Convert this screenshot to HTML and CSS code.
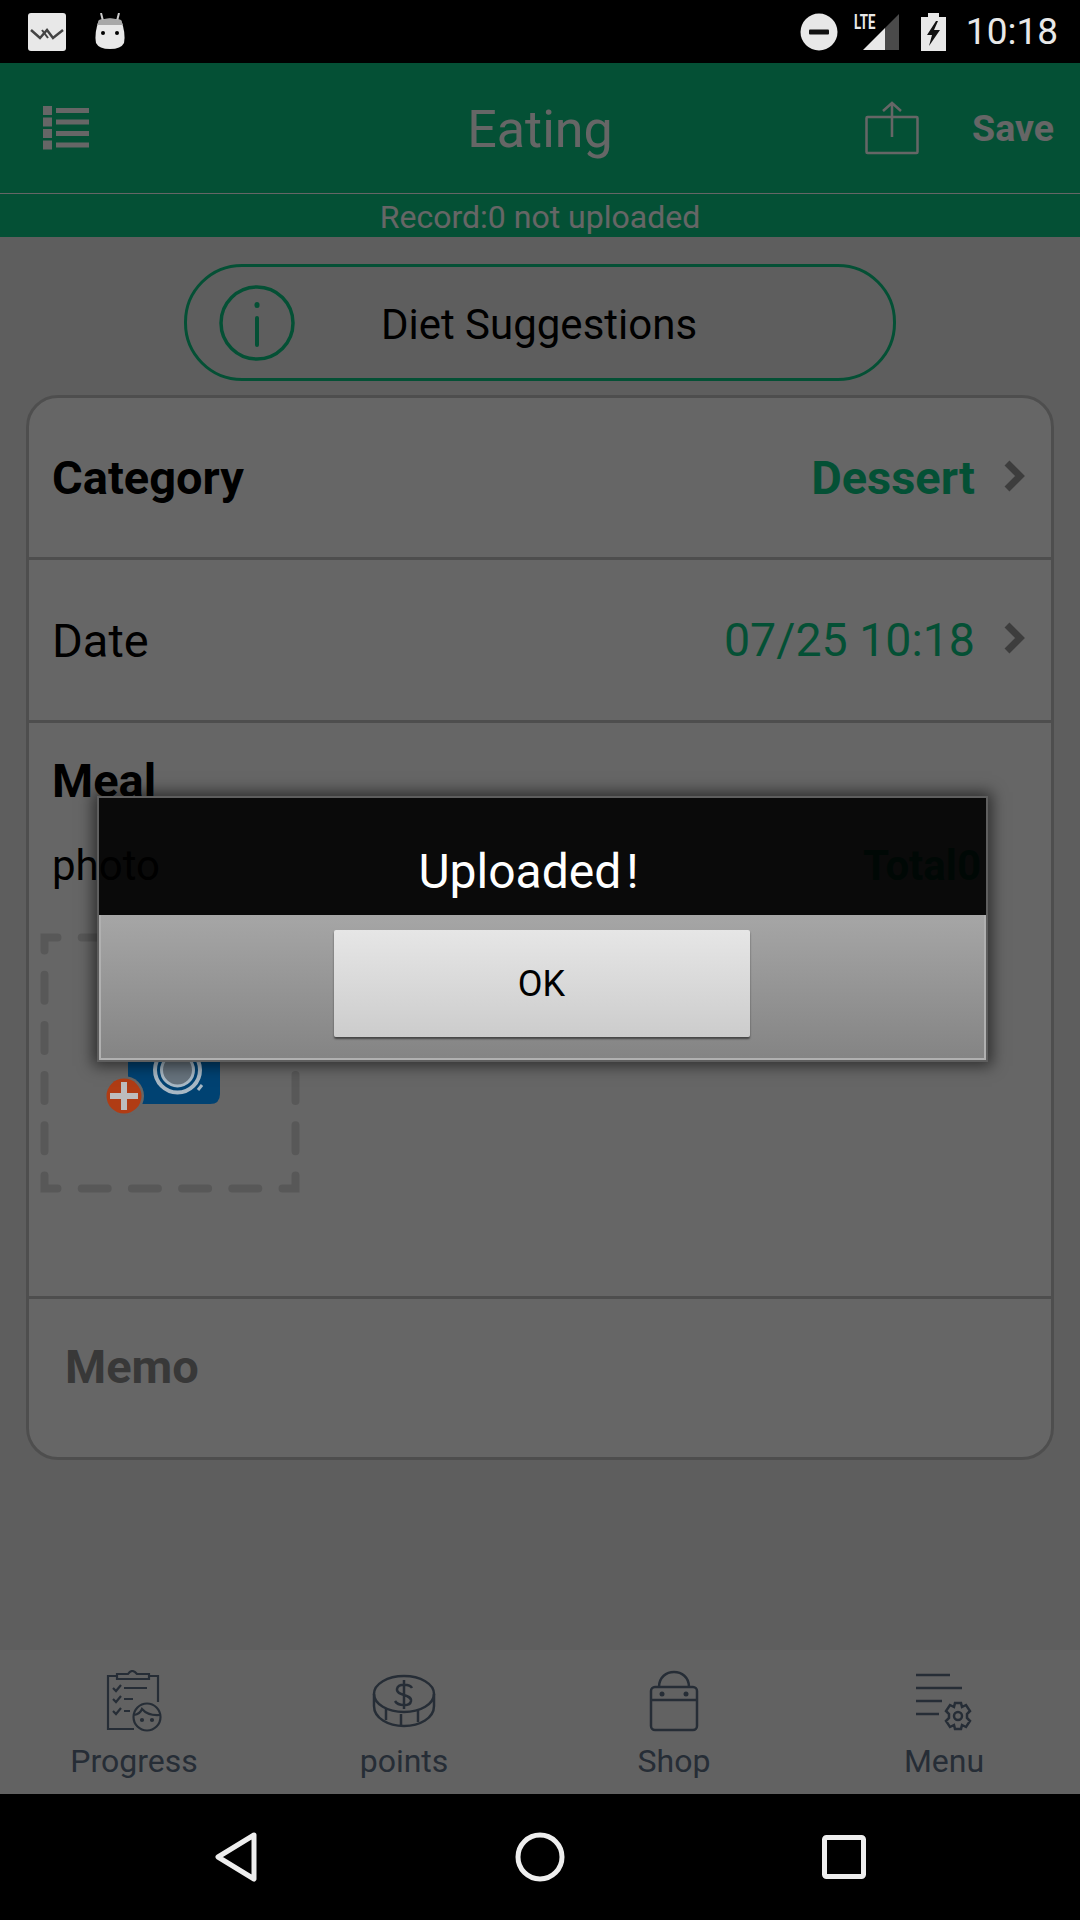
FILE: index.html
```html
<!DOCTYPE html>
<html lang="en">
<head>
    <meta charset="UTF-8">
    <meta name="viewport" content="width=device-width, initial-scale=1.0">
    <title>Eating</title>
    <link rel="stylesheet" href="styles.css">
</head>
<body>
    <div class="screen">
        <div class="status-bar">
            <div class="status-left">
                <svg width="38" height="38" viewBox="0 0 38 38">
                    <rect x="0" y="0" width="38" height="38" rx="3" fill="#e8e8e8"/>
                    <path d="M3 17 L12 25 L19 17 L25 25 L35 17" fill="none" stroke="#444" stroke-width="2.5"/>
                    <path d="M14 17 L20 25" fill="none" stroke="#444" stroke-width="2"/>
                </svg>
                <svg width="32" height="38" viewBox="0 0 32 38">
                    <path d="M7 0 L9 8 M25 0 L23 8" stroke="#ccc" stroke-width="2" fill="none"/>
                    <path d="M5 7 Q16 4 27 7 Q32 20 30 30 Q27 36 16 36 Q5 36 2 30 Q0 20 5 7 Z" fill="#e8e8e8"/>
                    <path d="M5 7 Q16 4 27 7 L29 12 L3 12 Z" fill="#a8a8a8"/>
                    <circle cx="9" cy="20" r="2" fill="#000"/>
                    <circle cx="23" cy="20" r="2" fill="#000"/>
                </svg>
            </div>
            <div class="status-right">
                <svg width="38" height="38" viewBox="0 0 38 38">
                    <circle cx="19" cy="19" r="18.500" fill="#e8e8e8"/>
                    <rect x="9" y="16.500" width="20" height="5" rx="1" fill="#111"/>
                </svg>
                <div class="signal">
                    <span class="lte">LTE</span>
                    <svg width="36" height="36" viewBox="0 0 36 36">
                        <path d="M0 36 L22 14 L22 36 Z" fill="#e8e8e8"/>
                        <path d="M22 14 L36 0 L36 36 L22 36 Z" fill="#4a4a4a"/>
                    </svg>
                </div>
                <svg width="25" height="38" viewBox="0 0 25 38">
                    <path d="M7 0 H18 V4 H25 V38 H0 V4 H7 Z" fill="#e8e8e8"/>
                    <path d="M15 8 L6 22 H11 L8 33 L19 17 H13 L17 8 Z" fill="#111"/>
                </svg>
                <span class="clock">10:18</span>
            </div>
        </div>

        <div class="app-bar">
            <div class="app-bar-left">
                <svg width="46" height="44" viewBox="0 0 46 44">
                    <g fill="#fff">
                        <rect x="0" y="0" width="9" height="9"/>
                        <rect x="0" y="11.500" width="9" height="9"/>
                        <rect x="0" y="23" width="9" height="9"/>
                        <rect x="0" y="34.500" width="9" height="9"/>
                        <rect x="13" y="2" width="33" height="5"/>
                        <rect x="13" y="13.500" width="33" height="5"/>
                        <rect x="13" y="25" width="33" height="5"/>
                        <rect x="13" y="36.500" width="33" height="5"/>
                    </g>
                </svg>
            </div>
            <div class="app-bar-title">Eating</div>
            <div class="app-bar-right">
                <svg width="54" height="54" viewBox="0 0 54 54">
                    <rect x="1.500" y="16" width="51" height="36" rx="1" fill="none" stroke="#fff" stroke-width="2.500"/>
                    <path d="M27 36 V2 M18 10 L27 2 L36 10" fill="none" stroke="#fff" stroke-width="2.500"/>
                </svg>
                <span class="save">Save</span>
            </div>
        </div>
        <div class="record-bar">Record:0 not uploaded</div>

        <div class="content">
            <div class="suggest">
                <svg class="suggest-icon" width="76" height="76" viewBox="0 0 76 76">
                    <circle cx="38" cy="38" r="36" fill="none" stroke="#0cc884" stroke-width="3.500"/>
                    <rect x="35.500" y="17" width="5" height="6" rx="2.500" fill="#0cc884"/>
                    <rect x="36" y="31" width="4" height="31" rx="2" fill="#0cc884"/>
                </svg>
                <span class="suggest-text">Diet Suggestions</span>
            </div>

            <div class="card">
                <div class="row row-first">
                    <span class="row-label bold">Category</span>
                    <span class="row-value bold">Dessert</span>
                    <svg class="chevron" width="22" height="32" viewBox="0 0 22 32">
                        <path d="M4 3 L17 16 L4 29" fill="none" stroke="#9a9a9a" stroke-width="7"/>
                    </svg>
                </div>
                <div class="row">
                    <span class="row-label">Date</span>
                    <span class="row-value">07/25 10:18</span>
                    <svg class="chevron" width="22" height="32" viewBox="0 0 22 32">
                        <path d="M4 3 L17 16 L4 29" fill="none" stroke="#9a9a9a" stroke-width="7"/>
                    </svg>
                </div>
                <div class="meal">
                    <div class="row-label bold">Meal</div>
                    <div class="photo-head">
                        <span class="photo-label">photo</span>
                        <span class="total">Total0</span>
                    </div>
                    <div class="photo-box">
                        <svg width="260" height="260" viewBox="0 0 260 260">
                            <rect x="4.500" y="4.500" width="251" height="251" fill="none" stroke="#dcdcdc" stroke-width="8" stroke-linecap="round" stroke-dasharray="26 24.200" stroke-dashoffset="13"/>
                        </svg>
                        <svg class="camera" width="120" height="76" viewBox="0 0 120 76">
                            <path d="M24 0 H116 V54 Q116 64 106 64 H36 Q24 64 24 54 Z" fill="#004272"/>
                            <circle cx="73.500" cy="30" r="22.500" fill="none" stroke="#a8b8c4" stroke-width="4"/>
                            <circle cx="73.500" cy="30" r="16" fill="#66727c" stroke="#a8b8c4" stroke-width="3"/>
                            <path d="M94 50 L98 45" stroke="#a8b8c4" stroke-width="3"/>
                            <circle cx="20" cy="56" r="20" fill="#666"/>
                            <circle cx="20" cy="56" r="17.500" fill="#b03c14"/>
                            <rect x="17" y="42" width="6" height="28" fill="#bdbdbd"/>
                            <rect x="6" y="53" width="28" height="6" fill="#bdbdbd"/>
                        </svg>
                    </div>
                </div>
                <div class="memo">Memo</div>
            </div>
        </div>

        <div class="tab-bar">
            <div class="tab">
                <svg width="56" height="62" viewBox="0 0 56 62" fill="none" stroke="#5f7288" stroke-width="2.200">
                    <path d="M10 6 H2 V59 H28 M44 6 H52 V32"/>
                    <path d="M11 9 V4 H22 Q26 -2 31 4 H43 V9 Z"/>
                    <path d="M7 18 L10 21 L15 15 M18 18 H41 M7 29 L10 32 L15 26 M18 29 H27 M7 41 L10 44 L15 38 M18 41 H24"/>
                    <circle cx="41" cy="47" r="13.500"/>
                    <path d="M28 45 Q34 44 36 39 Q42 46 54 45"/>
                    <circle cx="36" cy="50" r="1" fill="#5f7288"/>
                    <circle cx="46" cy="50" r="1" fill="#5f7288"/>
                </svg>
                <span>Progress</span>
            </div>
            <div class="tab">
                <svg width="64" height="54" viewBox="0 0 64 54" fill="none" stroke="#5f7288" stroke-width="2.500">
                    <ellipse cx="32" cy="20" rx="30" ry="18"/>
                    <path d="M2 20 V32 C2 44 16 52 32 52 C48 52 62 44 62 32 V20"/>
                    <path d="M14 46 V35 M29 51 V40 M46 48 V36"/>
                    <path d="M40 14 C38 10 26 9 25 15 C24 22 40 20 39 27 C38 33 26 32 23 27 M32 6 V35"/>
                </svg>
                <span>points</span>
            </div>
            <div class="tab">
                <svg width="50" height="62" viewBox="0 0 50 62" fill="none" stroke="#5f7288" stroke-width="2.500">
                    <path d="M10 17 C10 -3 40 -3 40 17"/>
                    <rect x="2" y="17" width="46" height="43" rx="4"/>
                    <path d="M2 30 H48"/>
                    <circle cx="13" cy="24" r="2.500" fill="#5f7288" stroke="none"/>
                    <circle cx="37" cy="24" r="2.500" fill="#5f7288" stroke="none"/>
                </svg>
                <span>Shop</span>
            </div>
            <div class="tab">
                <svg width="56" height="62" viewBox="0 0 56 62" fill="none" stroke="#5f7288" stroke-width="2.500">
                    <path d="M0 5 H34 M0 18 H46 M0 31 H26 M0 44 H23"/>
                    <circle cx="42" cy="46" r="4"/>
                    <path d="M39 33 H45 L46 37 L50 35 L54 41 L51 44 V48 L54 51 L50 57 L46 55 L45 59 H39 L38 55 L34 57 L30 51 L33 48 V44 L30 41 L34 35 L38 37 Z"/>
                </svg>
                <span>Menu</span>
            </div>
        </div>

        <div class="nav-bar">
            <svg width="44" height="50" viewBox="0 0 44 50">
                <path d="M40 3 L4 25 L40 47 Z" fill="none" stroke="#eee" stroke-width="5" stroke-linejoin="round"/>
            </svg>
            <svg width="50" height="50" viewBox="0 0 50 50">
                <circle cx="25" cy="25" r="22" fill="none" stroke="#eee" stroke-width="5"/>
            </svg>
            <svg width="44" height="44" viewBox="0 0 44 44">
                <rect x="2.500" y="2.500" width="39" height="39" rx="2" fill="none" stroke="#eee" stroke-width="5"/>
            </svg>
        </div>

        <div class="scrim"></div>
        <div class="dialog">
            <div class="dialog-title">Uploaded<span class="bang">!</span></div>
            <div class="dialog-actions">
                <button class="dialog-btn">OK</button>
            </div>
        </div>
    </div>
</body>
</html>
```

FILE: styles.css
```css
body {
    margin: 0;
    background-color: #000;
    font-family: Roboto, "Liberation Sans", sans-serif;
}
.screen {
    position: relative;
    width: 1080px;
    height: 1920px;
    display: flex;
    flex-direction: column;
    overflow: hidden;
    background-color: #ebebeb;
}

/* status bar */
.status-bar {
    height: 63px;
    background: #000;
    display: flex;
    justify-content: space-between;
    align-items: center;
    padding: 0 22px 0 28px;
    box-sizing: border-box;
}
.status-left {
    display: flex;
    gap: 28px;
    align-items: center;
}
.status-right {
    display: flex;
    align-items: center;
}
.signal {
    position: relative;
    width: 36px;
    height: 36px;
    margin: 0 22px 0 25px;
}
.lte {
    position: absolute;
    left: -9px;
    top: -1px;
    color: #e8e8e8;
    font-size: 21px;
    line-height: 18px;
    font-weight: 700;
    transform: scaleX(.63);
    transform-origin: left top;
}
.clock {
    color: #e8e8e8;
    font-size: 37px;
    margin-left: 20px;
}

/* green header */
.app-bar {
    height: 130px;
    background: #0cc884;
    border-bottom: 1px solid #fff;
    display: grid;
    grid-template-columns: 1fr auto 1fr;
    align-items: center;
    color: #fff;
}
.app-bar-left {
    padding-left: 43px;
    display: flex;
}
.app-bar-title {
    font-size: 52px;
    padding-top: 2px;
}
.app-bar-right {
    display: flex;
    justify-content: flex-end;
    align-items: center;
    gap: 53px;
    padding-right: 26px;
}
.save {
    font-size: 37.5px;
    font-weight: 700;
}
.record-bar {
    height: 43px;
    line-height: 46px;
    background: #0cc884;
    color: #fff;
    text-align: center;
    font-size: 32px;
}

/* body */
.content {
    flex: 1;
    padding: 27px 26px 0;
}
.suggest {
    width: 712px;
    height: 117px;
    margin: 0 auto;
    box-sizing: border-box;
    border: 3px solid #0cc884;
    border-radius: 58px;
    display: flex;
    align-items: center;
    position: relative;
}
.suggest-icon {
    margin-left: 32px;
}
.suggest-text {
    position: absolute;
    left: 0;
    right: 2px;
    top: 33px;
    text-align: center;
    font-size: 42px;
    color: #000;
}
.card {
    margin-top: 14px;
    height: 1065px;
    box-sizing: border-box;
    background: #fff;
    border: 3px solid #c4c4c4;
    border-radius: 32px;
    display: flex;
    flex-direction: column;
}
.row {
    height: 163px;
    border-bottom: 3px solid #c4c4c4;
    display: flex;
    align-items: center;
    padding: 0 26px 0 23px;
    box-sizing: border-box;
}
.row-first {
    height: 162px;
}
.row-label {
    font-size: 47px;
    color: #000;
}
.bold {
    font-weight: 700;
}
.row-value {
    margin-left: auto;
    margin-right: 28px;
    font-size: 46.500px;
    color: #0cc884;
}
.row-value.bold {
    font-size: 47px;
}
.chevron {
    margin-top: -4px;
}
.meal {
    height: 576px;
    border-bottom: 3px solid #c4c4c4;
    box-sizing: border-box;
    padding: 30px 23px 0;
}
.photo-head {
    display: flex;
    justify-content: space-between;
    margin-top: 33px;
    font-size: 42px;
}
.photo-label {
    color: #000;
}
.total {
    font-weight: 700;
    color: #0cc884;
    margin-right: 47px;
}
.photo-box {
    margin: 43px 0 0 -12px;
    width: 260px;
    height: 260px;
    position: relative;
}
.photo-box svg {
    display: block;
}
.camera {
    position: absolute;
    left: 64px;
    top: 107px;
    z-index: 2;
}
.memo {
    flex: 1;
    padding: 40px 36px 0;
    font-size: 47px;
    font-weight: 700;
    color: #8c8c8c;
}

/* bottom tabs */
.tab-bar {
    height: 144px;
    background: #f5f5f5;
    display: grid;
    grid-template-columns: repeat(4, 270px);
}
.tab {
    display: flex;
    flex-direction: column;
    align-items: center;
    padding: 20px 2px 0 0;
    box-sizing: border-box;
    color: #5f7288;
    font-size: 32px;
}
.tab svg {
    height: 62px;
    margin-bottom: 10px;
}
.nav-bar {
    height: 126px;
    background: #000;
    display: grid;
    grid-template-columns: repeat(3, 304px);
    justify-content: center;
    justify-items: center;
    align-items: center;
    position: relative;
    z-index: 3;
}

/* dialog */
.scrim {
    position: absolute;
    left: 0;
    right: 0;
    top: 63px;
    bottom: 126px;
    z-index: 1;
    background: rgba(0, 0, 0, .6);
}
.dialog {
    position: absolute;
    left: 97px;
    top: 796px;
    width: 891px;
    height: 266px;
    z-index: 3;
    box-sizing: border-box;
    border: 2px solid #5e5e5e;
    box-shadow: 0 0 14px 4px rgba(0, 0, 0, .55);
    display: flex;
    flex-direction: column;
}
.dialog-title {
    height: 117px;
    box-sizing: border-box;
    padding: 30px 28px 0 0;
    line-height: 87px;
    background: rgba(0, 0, 0, .9);
    color: #fff;
    text-align: center;
    font-size: 48px;
}
.bang {
    margin-left: 5px;
}
.dialog-actions {
    flex: 1;
    background: linear-gradient(#a6a6a6, #848484);
    border: 2px solid #b0b0b0;
    border-top: none;
    display: flex;
    justify-content: center;
    padding: 15px 2px 0 0;
    box-sizing: border-box;
}
.dialog-btn {
    width: 416px;
    height: 107px;
    border: none;
    border-radius: 2px;
    background: linear-gradient(#e6e6e6, #cccccc);
    box-shadow: 0 2px 2px rgba(0, 0, 0, .5);
    font-family: Roboto, "Liberation Sans", sans-serif;
    font-size: 36px;
    color: #000;
    padding: 0;
}
```
